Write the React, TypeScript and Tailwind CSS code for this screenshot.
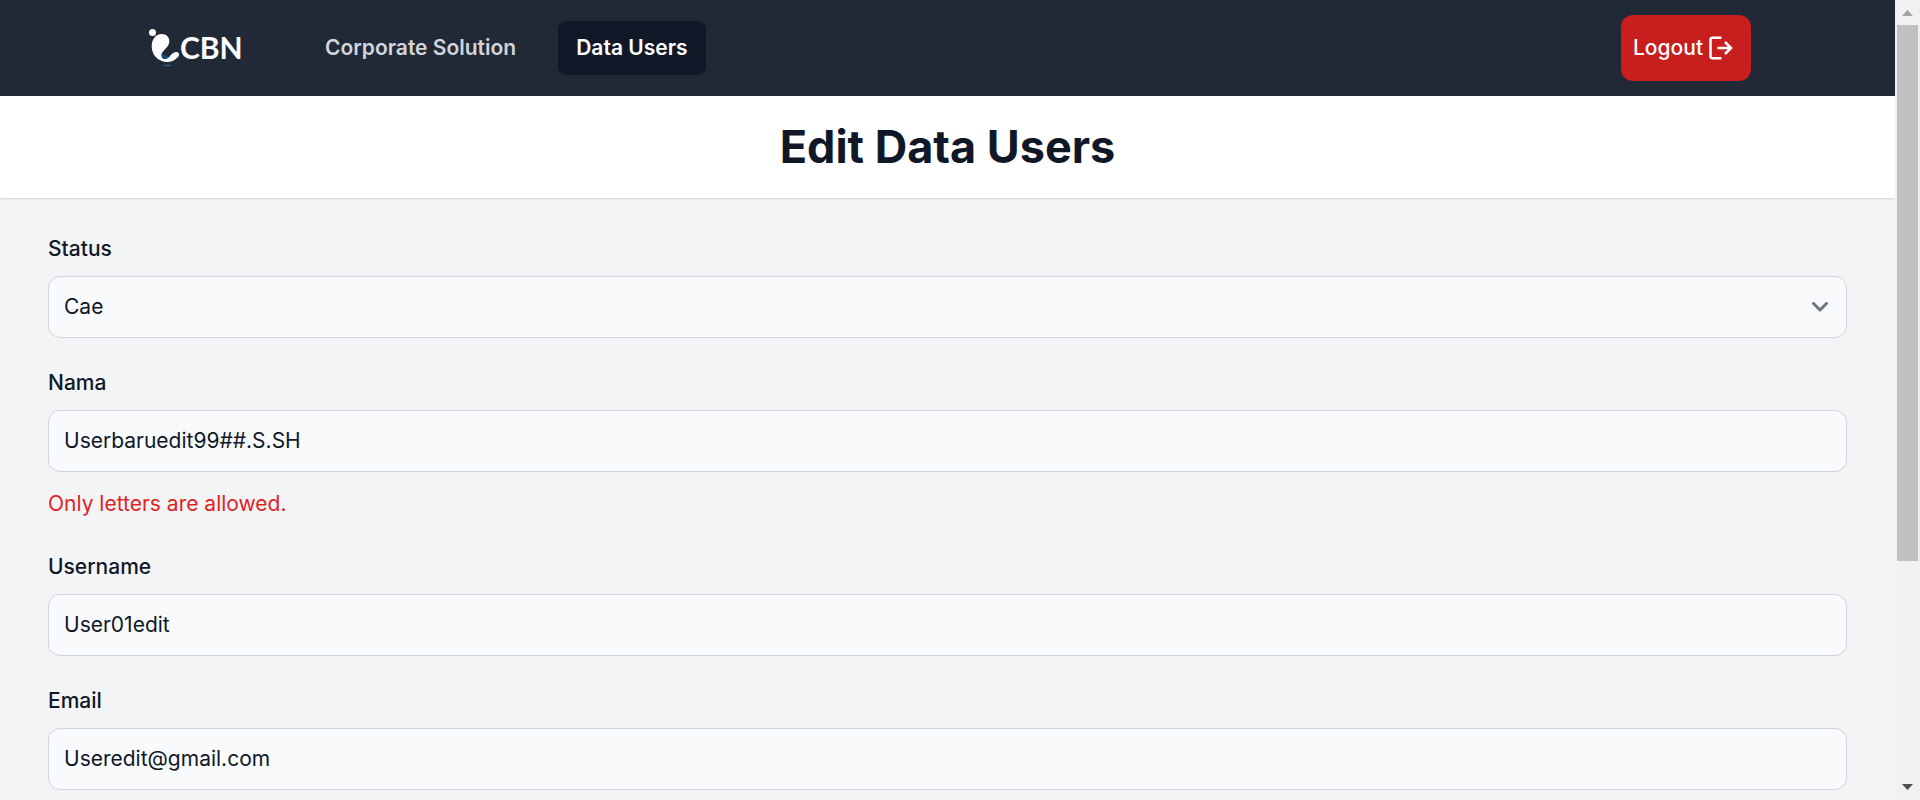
import { useState } from "react";

type Field = { id: string; label: string; value: string; type: string; error?: string };

const fields: Field[] = [
  { id: "nama", label: "Nama", value: "Userbaruedit99##.S.SH", type: "text", error: "Only letters are allowed." },
  { id: "username", label: "Username", value: "User01edit", type: "text" },
  { id: "email", label: "Email", value: "Useredit@gmail.com", type: "email" },
];

const controlClass =
  "block h-[62px] w-full rounded-xl border border-gray-300 bg-[#f9fafc] px-[15px] text-[21px] font-normal text-gray-900 outline-none";

function Logo() {
  return (
    <a href="#" aria-label="CBN" className="block">
      <svg viewBox="0 0 100 48" className="h-12 w-[100px]">
        <circle cx="8.5" cy="8.5" r="3.5" fill="#fff" />
        <path
          d="M17.700 10C22.500 10 25.300 13 25.300 17.500C25.300 22.500 20.500 25 18.500 28.500C16.500 32.500 19 35.500 22.500 34.500C26 33.500 27.500 28.500 32 28C35.500 27.800 36 31.500 33.500 33.500C30 37 26 38.500 22 38C14 37 7.700 31 7.700 22.500C7.700 15.500 11.500 10 17.700 10Z"
          fill="#fff"
        />
        <path d="M18.500 27.500C16 32 18 35.500 21.500 35C23.500 34.700 25 33 26 31.500C22 33 18.500 31.500 18.500 27.500Z" fill="#10487f" />
        <path d="M19.500 41.500h7.500" stroke="#2d5878" strokeWidth="1.500" />
        <text x="36" y="35" fontFamily="Lato, sans-serif" fontWeight="700" fontSize="30" fill="#fff">
          CBN
        </text>
      </svg>
    </a>
  );
}

function Scrollbar() {
  return (
    <div aria-hidden="true" className="flex w-[25px] shrink-0 flex-col items-center bg-[#f1f1f1]">
      <svg viewBox="0 0 25 25" className="h-[25px] w-[25px] shrink-0">
        <path d="M7 16h11l-5.500-6z" fill="#a3a3a3" />
      </svg>
      <div className="flex w-full flex-1 flex-col items-center">
        <div className="h-[71.4%] w-[21px] bg-[#c1c1c1]" />
      </div>
      <svg viewBox="0 0 25 25" className="h-[25px] w-[25px] shrink-0">
        <path d="M7 9h11l-5.500 6z" fill="#505050" />
      </svg>
    </div>
  );
}

export default function App() {
  const [values, setValues] = useState<Record<string, string>>(
    Object.fromEntries(fields.map((f) => [f.id, f.value])),
  );

  return (
    <div className="flex h-screen overflow-hidden bg-gray-100 font-['Inter',sans-serif] text-[21px] leading-[30px] text-gray-900">
      <div className="min-w-0 flex-1 overflow-hidden">
        <nav className="flex h-24 items-center bg-[#212936] px-36">
          <Logo />
          <div className="ml-[63px] flex items-center gap-6 font-semibold">
            <a href="#" className="rounded-lg px-[18px] py-3 text-gray-300">
              Corporate Solution
            </a>
            <a href="#" aria-current="page" className="rounded-lg bg-[#111827] px-[18px] py-3 text-white">
              Data Users
            </a>
          </div>
          <button type="button" className="ml-auto flex h-[66px] w-[130px] items-center gap-1 rounded-xl bg-[#c81e1e] pl-3 font-medium text-white">
            Logout
            <svg viewBox="0 0 26 24" className="h-6 w-[26px]" fill="none" stroke="currentColor" strokeWidth="2.500">
              <path d="M14.500 1.700H5.500Q3.500 1.700 3.500 3.700V20.300Q3.500 22.300 5.500 22.300H14.500" />
              <path d="M10.500 12H24.500M18 6L24 12L18 18" />
            </svg>
          </button>
        </nav>

        <header className="bg-white py-7 shadow">
          <h1 className="text-center text-[45px] leading-[46px] font-bold text-gray-900">Edit Data Users</h1>
        </header>

        <form className="flex flex-col gap-[30px] px-12 py-9">
          <div>
            <label htmlFor="status" className="mb-3 block font-medium">
              Status
            </label>
            <div className="relative">
              <select id="status" defaultValue="Cae" className={`${controlClass} appearance-none`}>
                <option>Cae</option>
                <option>Admin</option>
              </select>
              <svg
                viewBox="0 0 16 10"
                className="pointer-events-none absolute top-1/2 right-[19px] h-[10px] w-4 -translate-y-1/2"
                fill="none"
                stroke="#6b7280"
                strokeWidth="3"
                strokeLinecap="round"
                strokeLinejoin="round"
              >
                <path d="M1.500 1.500L8 8L14.500 1.500" />
              </svg>
            </div>
          </div>

          {fields.map((field) => (
            <div key={field.id}>
              <label htmlFor={field.id} className="mb-3 block font-medium">
                {field.label}
              </label>
              <input
                id={field.id}
                type={field.type}
                value={values[field.id]}
                aria-invalid={Boolean(field.error)}
                aria-describedby={field.error ? `${field.id}-error` : undefined}
                onChange={(e) => setValues({ ...values, [field.id]: e.target.value })}
                className={`${controlClass} pb-0.5`}
              />
              {field.error && (
                <p id={`${field.id}-error`} className="mt-3.5 leading-9 font-normal text-[#e02424]">
                  {field.error}
                </p>
              )}
            </div>
          ))}
        </form>
      </div>
      <Scrollbar />
    </div>
  );
}
